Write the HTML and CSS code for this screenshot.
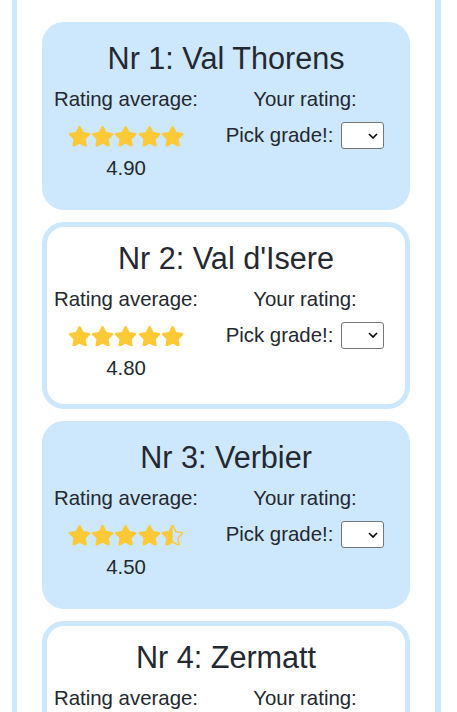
FILE: index.html
```html
<!DOCTYPE html>
<html lang="en">
<head>
<meta charset="utf-8">
<title>Ski resorts</title>
<link rel="stylesheet" href="styles.css">
</head>
<body>
<svg class="defs" aria-hidden="true">
  <defs>
    <path id="star" d="M259.3 17.8L194 150.2 47.9 171.5c-26.2 3.8-36.7 36.1-17.7 54.6l105.7 103-25 145.5c-4.5 26.3 23.2 46 46.4 33.7L288 439.6l130.7 68.7c23.2 12.2 50.9-7.4 46.4-33.7l-25-145.5 105.7-103c19-18.5 8.5-50.8-17.7-54.6L382 150.2 316.7 17.8c-11.7-23.6-45.6-23.9-57.4 0z"/>
    <clipPath id="starclip"><use href="#star"/></clipPath>
  </defs>
</svg>
<div class="list">
  <div class="card filled">
    <h2 class="title">Nr 1: Val Thorens</h2>
    <div class="cols">
      <div class="col col-left">
        <div class="label">Rating average:</div>
        <div class="stars">
          <svg class="star" viewBox="0 0 576 512"><use href="#star"/></svg><svg class="star" viewBox="0 0 576 512"><use href="#star"/></svg><svg class="star" viewBox="0 0 576 512"><use href="#star"/></svg><svg class="star" viewBox="0 0 576 512"><use href="#star"/></svg><svg class="star" viewBox="0 0 576 512"><use href="#star"/></svg>
        </div>
        <div class="avg">4.90</div>
      </div>
      <div class="col col-right">
        <div class="label">Your rating:</div>
        <div class="pick">
          <span class="pick-text">Pick grade!:</span>
          <span class="select-wrap">
            <select class="grade"><option></option><option>1</option><option>2</option><option>3</option><option>4</option><option>5</option></select>
            <svg class="chev" viewBox="0 0 10 6"><path d="M1 1l4 4 4-4" fill="none" stroke="#000" stroke-width="1.6"/></svg>
          </span>
        </div>
      </div>
    </div>
  </div>

  <div class="card outlined">
    <h2 class="title">Nr 2: Val d'Isere</h2>
    <div class="cols">
      <div class="col col-left">
        <div class="label">Rating average:</div>
        <div class="stars">
          <svg class="star" viewBox="0 0 576 512"><use href="#star"/></svg><svg class="star" viewBox="0 0 576 512"><use href="#star"/></svg><svg class="star" viewBox="0 0 576 512"><use href="#star"/></svg><svg class="star" viewBox="0 0 576 512"><use href="#star"/></svg><svg class="star" viewBox="0 0 576 512"><use href="#star"/></svg>
        </div>
        <div class="avg">4.80</div>
      </div>
      <div class="col col-right">
        <div class="label">Your rating:</div>
        <div class="pick">
          <span class="pick-text">Pick grade!:</span>
          <span class="select-wrap">
            <select class="grade"><option></option><option>1</option><option>2</option><option>3</option><option>4</option><option>5</option></select>
            <svg class="chev" viewBox="0 0 10 6"><path d="M1 1l4 4 4-4" fill="none" stroke="#000" stroke-width="1.6"/></svg>
          </span>
        </div>
      </div>
    </div>
  </div>

  <div class="card filled">
    <h2 class="title">Nr 3: Verbier</h2>
    <div class="cols">
      <div class="col col-left">
        <div class="label">Rating average:</div>
        <div class="stars">
          <svg class="star" viewBox="0 0 576 512"><use href="#star"/></svg><svg class="star" viewBox="0 0 576 512"><use href="#star"/></svg><svg class="star" viewBox="0 0 576 512"><use href="#star"/></svg><svg class="star" viewBox="0 0 576 512"><use href="#star"/></svg><svg class="star" viewBox="0 0 576 512"><g clip-path="url(#starclip)"><rect x="0" y="0" width="288" height="512"/><use href="#star" class="outline"/></g></svg>
        </div>
        <div class="avg">4.50</div>
      </div>
      <div class="col col-right">
        <div class="label">Your rating:</div>
        <div class="pick">
          <span class="pick-text">Pick grade!:</span>
          <span class="select-wrap">
            <select class="grade"><option></option><option>1</option><option>2</option><option>3</option><option>4</option><option>5</option></select>
            <svg class="chev" viewBox="0 0 10 6"><path d="M1 1l4 4 4-4" fill="none" stroke="#000" stroke-width="1.6"/></svg>
          </span>
        </div>
      </div>
    </div>
  </div>

  <div class="card outlined">
    <h2 class="title">Nr 4: Zermatt</h2>
    <div class="cols">
      <div class="col col-left">
        <div class="label">Rating average:</div>
        <div class="stars">
          <svg class="star" viewBox="0 0 576 512"><use href="#star"/></svg><svg class="star" viewBox="0 0 576 512"><use href="#star"/></svg><svg class="star" viewBox="0 0 576 512"><use href="#star"/></svg><svg class="star" viewBox="0 0 576 512"><use href="#star"/></svg><svg class="star" viewBox="0 0 576 512"><g clip-path="url(#starclip)"><rect x="0" y="0" width="288" height="512"/><use href="#star" class="outline"/></g></svg>
        </div>
        <div class="avg">4.40</div>
      </div>
      <div class="col col-right">
        <div class="label">Your rating:</div>
        <div class="pick">
          <span class="pick-text">Pick grade!:</span>
          <span class="select-wrap">
            <select class="grade"><option></option><option>1</option><option>2</option><option>3</option><option>4</option><option>5</option></select>
            <svg class="chev" viewBox="0 0 10 6"><path d="M1 1l4 4 4-4" fill="none" stroke="#000" stroke-width="1.6"/></svg>
          </span>
        </div>
      </div>
    </div>
  </div>
</div>
</body>
</html>
```

FILE: styles.css
```css
html, body {
  margin: 0;
  padding: 0;
  background: #fff;
}

body {
  font-family: "Liberation Sans", Arial, sans-serif;
  font-size: 20.4px;
  color: #242830;
}

.defs {
  display: block;
  width: 0;
  height: 0;
  overflow: hidden;
}

.list {
  width: 418px;
  margin-left: 12px;
  border-left: 5px solid #cde7fc;
  border-right: 6px solid #cde7fc;
  padding: 22px 0 40px;
  min-height: 800px;
}

.card {
  box-sizing: border-box;
  width: 368px;
  margin: 0 0 12px 25px;
  border: 5px solid #cde7fc;
  border-radius: 22px;
  padding: 13px 0 24.5px;
}

.card.filled {
  background: #cde7fc;
}

.card.outlined {
  background: #fff;
}

.title {
  margin: 0;
  font-size: 30.6px;
  font-weight: normal;
  line-height: 36px;
  text-align: center;
}

.cols {
  display: grid;
  grid-template-columns: 146px 160px;
  column-gap: 26px;
  margin-top: 11px;
  padding-left: 6px;
}

.col {
  display: flex;
  flex-direction: column;
  align-items: center;
}

.label {
  line-height: 24px;
  white-space: nowrap;
}

.stars {
  display: flex;
  margin-top: 15px;
  fill: #fdc936;
}

.star {
  display: block;
  width: 23.2px;
  height: 20.6px;
}

.star .outline {
  fill: none;
  stroke: #fdc936;
  stroke-width: 70;
}

.avg {
  margin-top: 9.5px;
  line-height: 24px;
}

.pick {
  display: flex;
  align-items: flex-start;
  margin-top: 10px;
  white-space: nowrap;
}

.pick-text {
  line-height: 24px;
  margin-top: 2px;
  margin-right: 8px;
}

.select-wrap {
  position: relative;
  display: block;
  margin-top: 1px;
}

.grade {
  display: block;
  box-sizing: border-box;
  width: 43px;
  height: 27px;
  margin: 0;
  padding: 0 4px;
  appearance: none;
  -webkit-appearance: none;
  background: #fff;
  border: 1px solid #767676;
  border-radius: 3px;
  font-family: "Liberation Sans", Arial, sans-serif;
  font-size: 13px;
  color: #000;
}

.chev {
  position: absolute;
  left: 27px;
  top: 10.5px;
  width: 10px;
  height: 6px;
  pointer-events: none;
}
```
